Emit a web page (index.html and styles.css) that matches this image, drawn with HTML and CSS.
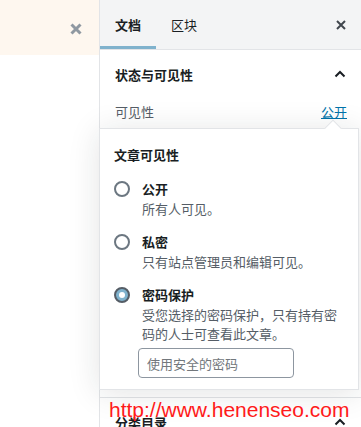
FILE: index.html
```html
<!DOCTYPE html>
<html lang="zh-CN">
<head>
    <meta charset="UTF-8">
    <meta name="viewport" content="width=device-width, initial-scale=1.0">
    <link rel="stylesheet" href="styles.css">
</head>
<body>
    <div class="page">
        <!-- 编辑区 -->
        <div class="editor">
            <div class="notice">
                <svg class="notice-close" width="12" height="12" viewBox="0 0 12 12"><path d="M1.5 1.5l9 9M10.5 1.5l-9 9" stroke="#8f98a1" stroke-width="3"/></svg>
            </div>
        </div>

        <!-- 侧边栏 -->
        <aside class="sidebar">
            <div class="tabs">
                <div class="tab active">文档</div>
                <div class="tab">区块</div>
                <span class="tabs-close">
                    <svg width="10" height="10" viewBox="0 0 10 10"><path d="M1 1l8 8M9 1l-8 8" stroke="#40464d" stroke-width="2"/></svg>
                </span>
            </div>

            <section class="panel panel-status">
                <div class="panel-title">
                    <span>状态与可见性</span>
                    <svg class="chevron" width="12" height="8" viewBox="0 0 12 8"><path d="M1.5 6.5L6 2l4.5 4.5" fill="none" stroke="#191e23" stroke-width="2"/></svg>
                </div>
                <div class="panel-body">
                    <div class="row">
                        <span class="row-label">可见性</span>
                        <a class="row-link">公开</a>
                    </div>
                </div>
            </section>

            <section class="panel">
                <div class="panel-title">
                    <span>分类目录</span>
                    <svg class="chevron" width="12" height="8" viewBox="0 0 12 8"><path d="M1.5 6.5L6 2l4.5 4.5" fill="none" stroke="#191e23" stroke-width="2"/></svg>
                </div>
            </section>

            <!-- 可见性弹出框 -->
            <div class="popover">
                <div class="popover-title">文章可见性</div>
                <div class="option">
                    <span class="radio"></span>
                    <div class="option-text">
                        <div class="option-label">公开</div>
                        <div class="option-desc">所有人可见。</div>
                    </div>
                </div>
                <div class="option">
                    <span class="radio"></span>
                    <div class="option-text">
                        <div class="option-label">私密</div>
                        <div class="option-desc">只有站点管理员和编辑可见。</div>
                    </div>
                </div>
                <div class="option">
                    <span class="radio checked"></span>
                    <div class="option-text">
                        <div class="option-label">密码保护</div>
                        <div class="option-desc">受您选择的密码保护，只有持有密码的人士可查看此文章。</div>
                        <input class="password" type="text" placeholder="使用安全的密码">
                    </div>
                </div>
            </div>
        </aside>

        <div class="watermark">http://www.henenseo.com</div>
    </div>
</body>
</html>
```

FILE: styles.css
```css
/* 공통 */
body {
    margin: 0;
    padding: 0;
    font-family: "Noto Sans CJK SC", "Noto Sans", sans-serif;
    font-size: 13px;
    color: #191e23;
    background-color: #fff;
    overflow: hidden;
}

.page {
    display: flex;
    width: 361px;
    height: 427px;
    position: relative;
    overflow: hidden;
}

/* 编辑区 */
.editor {
    width: 99px;
    flex-shrink: 0;
}

.notice {
    height: 55px;
    background-color: #fef7ef;
    display: flex;
    align-items: center;
    justify-content: flex-end;
    padding-right: 17px;
    padding-top: 3px;
    box-sizing: border-box;
}

/* 侧边栏 */
.sidebar {
    width: 262px;
    flex-shrink: 0;
    border-left: 1px solid #e2e4e7;
    position: relative;
    display: flex;
    flex-direction: column;
}

.tabs {
    height: 49px;
    flex-shrink: 0;
    background-color: #f3f4f5;
    border-bottom: 1px solid #e2e4e7;
    display: flex;
    align-items: stretch;
}

.tab {
    padding: 0 15px;
    display: flex;
    align-items: center;
    line-height: 18px;
}

.tab.active {
    font-weight: bold;
    box-shadow: inset 0 -3px #7fb2cd;
}

.tabs-close {
    margin-left: auto;
    margin-right: 16px;
    display: flex;
    align-items: center;
}

.panel {
    flex-shrink: 0;
    border-bottom: 1px solid #e2e4e7;
}

.panel-title {
    height: 48px;
    padding: 0 16px 0 15px;
    display: flex;
    align-items: center;
    justify-content: space-between;
    font-weight: bold;
}

.panel-status .panel-body {
    height: 299px;
    padding: 5px 15px 0 15px;
    box-sizing: border-box;
}

.row {
    display: flex;
    justify-content: space-between;
    line-height: 18px;
}

.row-label {
    color: #555d66;
}

.row-link {
    color: #0073aa;
    text-decoration: underline;
}

/* 弹出框 */
.popover {
    position: absolute;
    top: 128px;
    left: -1px;
    width: 260px;
    height: 262px;
    box-sizing: border-box;
    background-color: #fff;
    border: 1px solid #e2e4e7;
    box-shadow: 0 3px 30px rgba(25, 30, 35, 0.12);
    padding: 17px 14px 0 14px;
}

.popover::before {
    content: "";
    position: absolute;
    top: -7px;
    left: 227px;
    width: 11px;
    height: 11px;
    background-color: #fff;
    border-top: 1px solid #e2e4e7;
    border-left: 1px solid #e2e4e7;
    transform: rotate(45deg);
}

.popover-title {
    font-weight: bold;
    line-height: 18px;
    margin-bottom: 16px;
}

.option {
    display: flex;
    align-items: flex-start;
    margin-bottom: 15px;
}

.radio {
    width: 16px;
    height: 16px;
    box-sizing: border-box;
    border: 2px solid #6c7781;
    border-radius: 50%;
    margin-top: 1px;
    margin-right: 12px;
    flex-shrink: 0;
    position: relative;
}

.radio.checked {
    background-color: #7fb2cd;
    border-color: #555d66;
}

.radio.checked::after {
    content: "";
    position: absolute;
    top: 3px;
    left: 3px;
    width: 6px;
    height: 6px;
    border-radius: 50%;
    background-color: #fff;
}

.option-label {
    font-weight: bold;
    line-height: 18px;
}

.option-desc {
    color: #555d66;
    line-height: 19px;
    margin-top: 1px;
}

.password {
    display: block;
    margin-top: 5px;
    margin-left: -4px;
    width: 156px;
    height: 30px;
    box-sizing: border-box;
    border: 1px solid #8d96a0;
    border-radius: 4px;
    padding: 0 8px;
    font-family: inherit;
    font-size: 13px;
}

.password::placeholder {
    color: #72777c;
}

/* 워터마크 */
.watermark {
    position: absolute;
    top: 398px;
    left: 109px;
    font-family: "Liberation Sans", Arial, sans-serif;
    font-size: 21px;
    line-height: 24px;
    color: #ff1a1a;
}
```
